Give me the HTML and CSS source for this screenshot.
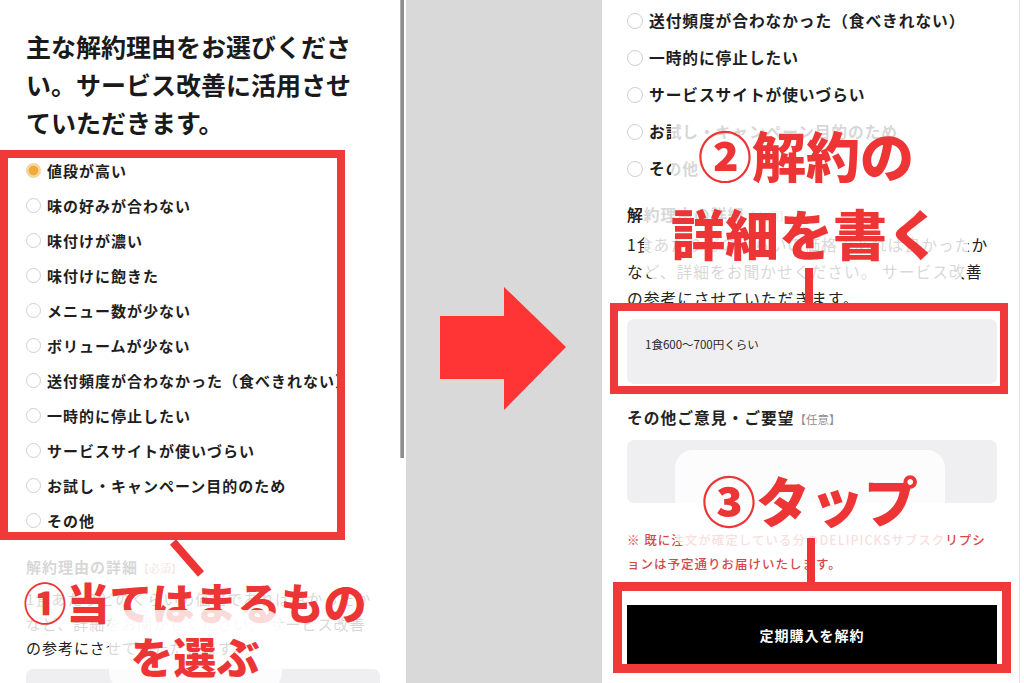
FILE: index.html
```html
<!DOCTYPE html>
<html lang="ja">
<head>
<meta charset="utf-8">
<title>解約理由</title>
<link rel="stylesheet" href="styles.css">
</head>
<body>
<div class="canvas">
  <section class="panel-left">
    <div class="screen-left">
      <h1 class="title">主な解約理由をお選びください。サービス改善に活用させていただきます。</h1>
      <ul class="reasons">
        <li class="reason"><span class="radio checked"></span><span class="reason-text">値段が高い</span></li>
        <li class="reason"><span class="radio"></span><span class="reason-text">味の好みが合わない</span></li>
        <li class="reason"><span class="radio"></span><span class="reason-text">味付けが濃い</span></li>
        <li class="reason"><span class="radio"></span><span class="reason-text">味付けに飽きた</span></li>
        <li class="reason"><span class="radio"></span><span class="reason-text">メニュー数が少ない</span></li>
        <li class="reason"><span class="radio"></span><span class="reason-text">ボリュームが少ない</span></li>
        <li class="reason"><span class="radio"></span><span class="reason-text">送付頻度が合わなかった（食べきれない）</span></li>
        <li class="reason"><span class="radio"></span><span class="reason-text">一時的に停止したい</span></li>
        <li class="reason"><span class="radio"></span><span class="reason-text">サービスサイトが使いづらい</span></li>
        <li class="reason"><span class="radio"></span><span class="reason-text">お試し・キャンペーン目的のため</span></li>
        <li class="reason"><span class="radio"></span><span class="reason-text">その他</span></li>
      </ul>
      <div class="field-label field-label-left">解約理由の詳細<span class="tag tag-left">【必須】</span></div>
      <p class="field-desc field-desc-left">1食あたりどのくらいの価格であれば良かったか<br>など、詳細をお聞かせください。 サービス改善<br>の参考にさせていただきます。</p>
      <div class="input-left"></div>
    </div>
    <div class="scroll-track"><div class="scroll-thumb"></div></div>
  </section>

  <div class="gap">
    <svg class="arrow" width="126" height="124" viewBox="0 0 126 124">
      <polygon points="0,29 64,29 64,0 126,60 64,123 64,92 0,92" fill="#ff3535"/>
    </svg>
  </div>

  <section class="panel-right">
    <div class="screen-right">
      <ul class="reasons reasons-right">
        <li class="reason reason-right"><span class="radio radio-right"></span><span class="reason-text reason-text-right">送付頻度が合わなかった（食べきれない）</span></li>
        <li class="reason reason-right"><span class="radio radio-right"></span><span class="reason-text reason-text-right">一時的に停止したい</span></li>
        <li class="reason reason-right"><span class="radio radio-right"></span><span class="reason-text reason-text-right">サービスサイトが使いづらい</span></li>
        <li class="reason reason-right"><span class="radio radio-right"></span><span class="reason-text reason-text-right">お試し・キャンペーン目的のため</span></li>
        <li class="reason reason-right"><span class="radio radio-right"></span><span class="reason-text reason-text-right">その他</span></li>
      </ul>
      <div class="field-label field-label-right">解約理由の詳細<span class="tag tag-right">【必須】</span></div>
      <p class="field-desc field-desc-right">1食あたりどのくらいの価格であれば良かったか<br>など、詳細をお聞かせください。 サービス改善<br>の参考にさせていただきます。</p>
      <div class="input-right">1食600〜700円くらい</div>
      <div class="field-label field-label-right field-label-other">その他ご意見・ご要望<span class="tag tag-right">【任意】</span></div>
      <div class="textarea-right"></div>
      <p class="note">※ 既に注文が確定している分のDELIPICKSサブスクリプシ<br>ョンは予定通りお届けいたします。</p>
      <div class="submit">定期購入を解約</div>
    </div>
  </section>

  <!-- annotations drawn over the screenshots -->
  <div class="mark-box mark-box-1"></div>
  <div class="callout callout-1"><span class="callout-text">①当てはまるもの<br>を選ぶ</span></div>
  <svg class="leader-1" width="40" height="40" viewBox="0 0 40 40">
    <line x1="5" y1="3" x2="33" y2="35" stroke="#ee3535" stroke-width="8"/>
  </svg>

  <div class="callout callout-2"><span class="callout-text callout-text-big">②解約の<br>詳細を書く</span></div>
  <div class="stem stem-2"></div>
  <div class="mark-box mark-box-2"></div>

  <div class="callout callout-3"><span class="callout-text callout-text-big">③タップ</span></div>
  <div class="stem stem-3"></div>
  <div class="mark-box mark-box-3"></div>
</div>
</body>
</html>
```

FILE: styles.css
```css
* {
  box-sizing: border-box;
  margin: 0;
  padding: 0;
}

html, body {
  width: 1024px;
  height: 683px;
  overflow: hidden;
  background: #ffffff;
}

body {
  font-family: "Noto Sans CJK JP", "Noto Sans", sans-serif;
  color: #1e1e1e;
}

.canvas {
  position: relative;
  display: flex;
  width: 1024px;
  height: 683px;
  overflow: hidden;
}

/* ---------- left screenshot ---------- */
.panel-left {
  display: flex;
  width: 406px;
  flex: none;
  background: #ffffff;
}

.screen-left {
  width: 400px;
  padding: 27px 0 0 26px;
  overflow: hidden;
}

.title {
  width: 340px;
  font-size: 25px;
  line-height: 38px;
  font-weight: 700;
  color: #1a1a1a;
}

.reasons {
  list-style: none;
  margin-top: 12px;
}

.reason {
  display: flex;
  align-items: center;
  height: 35px;
}

.radio {
  flex: none;
  width: 15px;
  height: 15px;
  margin-right: 6px;
  border: 1px solid #cfcfcf;
  border-radius: 50%;
  background: #ffffff;
}

.radio.checked {
  border-color: #f2cf94;
  background: radial-gradient(circle, #efab3c 0 4.6px, #f7d9a6 5.2px 100%);
}

.reason-text {
  font-size: 15px;
  line-height: 35px;
  font-weight: 700;
  letter-spacing: 1px;
  white-space: nowrap;
  color: #1e1e1e;
}

.field-label {
  font-weight: 700;
  white-space: nowrap;
  color: #222222;
}

.field-label-left {
  margin-top: 16px;
  font-size: 15px;
  line-height: 25px;
  letter-spacing: 1px;
}

.tag {
  font-weight: 400;
  color: #8f8f8f;
  letter-spacing: 0;
}

.tag-left {
  font-size: 11px;
  color: #b07070;
}

.field-desc {
  font-weight: 400;
  white-space: nowrap;
  color: #222222;
}

.field-desc-left {
  margin-top: 6px;
  font-size: 15px;
  line-height: 24.5px;
  letter-spacing: 1px;
}

.input-left {
  width: 354px;
  height: 60px;
  margin-top: 8px;
  border-radius: 7px;
  background: #efeef1;
}

.scroll-track {
  width: 6px;
  flex: none;
  background: #ffffff;
}

.scroll-thumb {
  width: 4px;
  height: 458px;
  background: #8d8d8d;
  border-left: 1px solid #b0b0b0;
}

/* ---------- middle gap with arrow ---------- */
.gap {
  width: 196px;
  flex: none;
  background: #d9d9d9;
}

.arrow {
  display: block;
  margin: 287px 0 0 34px;
}

/* ---------- right screenshot ---------- */
.panel-right {
  width: 422px;
  flex: none;
  background: #ffffff;
}

.screen-right {
  width: 418px;
  height: 683px;
  padding: 2px 21px 0 25px;
  border-right: 1px solid #e6e6e6;
}

.reasons-right {
  margin-top: 0;
}

.reason-right {
  height: 37px;
}

.radio-right {
  width: 16px;
  height: 16px;
  margin-right: 6px;
}

.reason-text-right {
  font-size: 15.75px;
  line-height: 37px;
  letter-spacing: 0.9px;
}

.field-label-right {
  margin-top: 14px;
  font-size: 15.75px;
  line-height: 27px;
  letter-spacing: 1px;
}

.tag-right {
  font-size: 11.5px;
}

.field-desc-right {
  margin-top: 1px;
  font-size: 15.75px;
  line-height: 27px;
  letter-spacing: 1px;
}

.input-right {
  width: 370px;
  height: 65px;
  margin-top: 7px;
  padding: 15px 0 0 18px;
  border-radius: 7px;
  background: #efeef1;
  font-size: 11.5px;
  line-height: 20px;
  color: #2a2a2a;
}

.field-label-other {
  margin-top: 20px;
}

.textarea-right {
  width: 370px;
  height: 63px;
  margin-top: 7px;
  border-radius: 7px;
  background: #efeef1;
}

.note {
  margin-top: 25px;
  font-size: 12.5px;
  line-height: 24px;
  letter-spacing: 1px;
  font-weight: 500;
  white-space: nowrap;
  color: #d64848;
}

.submit {
  width: 370px;
  height: 60px;
  margin-top: 29px;
  background: #000000;
  color: #ffffff;
  font-size: 14px;
  font-weight: 700;
  letter-spacing: 1px;
  line-height: 60px;
  text-align: center;
}

/* ---------- annotations ---------- */
.mark-box {
  position: absolute;
  border-style: solid;
  border-color: #f03a3a;
}

.mark-box-1 {
  left: 0;
  top: 150px;
  width: 345px;
  height: 390px;
  border-width: 8px;
}

.mark-box-2 {
  left: 610px;
  top: 303px;
  width: 398px;
  height: 91px;
  border-width: 8px;
}

.mark-box-3 {
  left: 613px;
  top: 582px;
  width: 398px;
  height: 91px;
  border-width: 9px;
}

.callout {
  position: absolute;
  text-align: center;
  font-weight: 900;
  color: #ee3535;
  white-space: nowrap;
}

.callout-text {
  background: rgba(255, 255, 255, 0.82);
  border-radius: 18px;
  -webkit-box-decoration-break: clone;
  box-decoration-break: clone;
}

.callout-1 {
  left: -6px;
  top: 574px;
  width: 402px;
  font-size: 43px;
  line-height: 54px;
}

.callout-1 .callout-text {
  padding: 14px 22px 4px;
}

.callout-text-big {
  padding: 10px 27px;
}

.callout-2 {
  left: 602px;
  top: 116px;
  width: 408px;
  font-size: 54px;
  line-height: 78px;
}

.callout-3 {
  left: 606px;
  top: 461px;
  width: 408px;
  font-size: 54px;
  line-height: 78px;
}

.leader-1 {
  position: absolute;
  left: 168px;
  top: 539px;
}

.stem {
  position: absolute;
  width: 8px;
  background: #ee3535;
}

.stem-2 {
  left: 805px;
  top: 268px;
  height: 36px;
}

.stem-3 {
  left: 807px;
  top: 538px;
  height: 45px;
}
```
